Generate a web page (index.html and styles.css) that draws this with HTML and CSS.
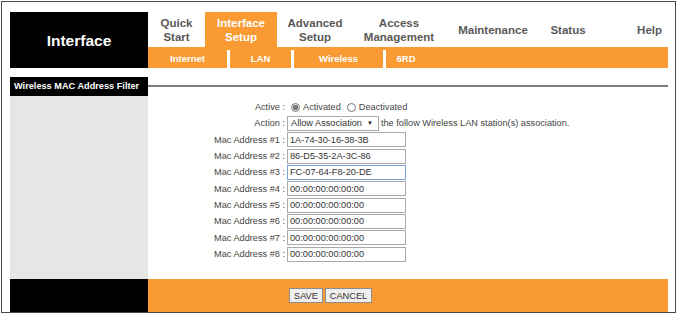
FILE: index.html
```html
<!DOCTYPE html>
<html lang="en">
<head>
    <meta charset="UTF-8">
    <title>Interface Setup - Wireless MAC Address Filter</title>
    <link rel="stylesheet" href="styles.css">
</head>
<body>
    <div class="frame">
        <!-- top navigation -->
        <div class="top">
            <div class="logo">Interface</div>
            <div class="nav">
                <div class="tabs">
                    <div class="tab">Quick<br>Start</div>
                    <div class="tab active">Interface<br>Setup</div>
                    <div class="tab">Advanced<br>Setup</div>
                    <div class="tab">Access<br>Management</div>
                    <div class="tab">Maintenance</div>
                    <div class="tab">Status</div>
                    <div class="tab help">Help</div>
                </div>
                <div class="subnav">
                    <span class="sub sub-internet">Internet</span>
                    <span class="sep"></span>
                    <span class="sub sub-lan">LAN</span>
                    <span class="sep"></span>
                    <span class="sub sub-wireless">Wireless</span>
                    <span class="sep"></span>
                    <span class="sub sub-6rd">6RD</span>
                </div>
            </div>
        </div>

        <div class="spacer"></div>

        <!-- section title -->
        <div class="section">
            <div class="section-title">Wireless MAC Address Filter</div>
            <div class="section-line"></div>
        </div>

        <!-- form body -->
        <div class="main">
            <div class="side"></div>
            <form class="content" id="macForm">
                <div class="row">
                    <label class="lbl">Active :</label>
                    <div class="val">
                        <input type="radio" name="active" value="1" checked> <span class="opt">Activated</span>
                        <input type="radio" name="active" value="0"> <span class="opt">Deactivated</span>
                    </div>
                </div>
                <div class="row">
                    <label class="lbl">Action :</label>
                    <div class="val">
                        <span class="select-box">
                            <select name="action">
                                <option>Allow Association</option>
                                <option>Deny Association</option>
                            </select>
                            <span class="arrow">&#9660;</span>
                        </span>
                        <span class="note">the follow Wireless LAN station(s) association.</span>
                    </div>
                </div>
                <div class="row">
                    <label class="lbl">Mac Address #1 :</label>
                    <div class="val"><input type="text" class="mac" value="1A-74-30-16-38-3B"></div>
                </div>
                <div class="row">
                    <label class="lbl">Mac Address #2 :</label>
                    <div class="val"><input type="text" class="mac" value="86-D5-35-2A-3C-86"></div>
                </div>
                <div class="row">
                    <label class="lbl">Mac Address #3 :</label>
                    <div class="val"><input type="text" class="mac focus" value="FC-07-64-F8-20-DE"></div>
                </div>
                <div class="row">
                    <label class="lbl">Mac Address #4 :</label>
                    <div class="val"><input type="text" class="mac" value="00:00:00:00:00:00"></div>
                </div>
                <div class="row">
                    <label class="lbl">Mac Address #5 :</label>
                    <div class="val"><input type="text" class="mac" value="00:00:00:00:00:00"></div>
                </div>
                <div class="row">
                    <label class="lbl">Mac Address #6 :</label>
                    <div class="val"><input type="text" class="mac" value="00:00:00:00:00:00"></div>
                </div>
                <div class="row">
                    <label class="lbl">Mac Address #7 :</label>
                    <div class="val"><input type="text" class="mac" value="00:00:00:00:00:00"></div>
                </div>
                <div class="row">
                    <label class="lbl">Mac Address #8 :</label>
                    <div class="val"><input type="text" class="mac" value="00:00:00:00:00:00"></div>
                </div>
            </form>
        </div>

        <!-- footer buttons -->
        <div class="footer">
            <div class="footer-side"></div>
            <div class="footer-bar">
                <button type="submit" form="macForm" class="btn">SAVE</button>
                <button type="button" class="btn">CANCEL</button>
            </div>
        </div>
    </div>
</body>
</html>
```

FILE: styles.css
```css
body {
    margin: 0;
    padding: 0;
    background-color: #fff;
    font-family: "Liberation Sans", Arial, sans-serif;
    color: #333;
}

/* outer frame */
.frame {
    margin: 1px 0 0 1px;
    width: 658px;
    height: 300px;
    padding: 10px 7px 0 8px;
    border: 1px solid #4a4a4a;
}

/* Header */
.top {
    display: flex;
    height: 56px;
}

.logo {
    width: 138px;
    background-color: #000;
    color: #fff;
    font-size: 15.5px;
    font-weight: bold;
    display: flex;
    align-items: center;
    justify-content: center;
    padding-top: 1px;
}

.nav {
    flex: 1;
    display: flex;
    flex-direction: column;
}

.tabs {
    display: grid;
    grid-template-columns: 57px 72px 76px 92px 96px 54px 1fr;
    height: 35px;
}

.tab {
    display: flex;
    align-items: center;
    justify-content: center;
    text-align: center;
    font-size: 11.5px;
    font-weight: bold;
    line-height: 14px;
    color: #595959;
}

.tab.active {
    background-color: #f99a33;
    color: #fff;
}

.tab.help {
    justify-content: flex-end;
    padding-right: 6px;
}

.subnav {
    flex: 1;
    display: flex;
    background-color: #f99a33;
}

.sub {
    display: flex;
    align-items: center;
    justify-content: center;
    color: #fff;
    font-size: 9.5px;
    font-weight: bold;
    padding-top: 1px;
}

.sub-internet { width: 79px; }
.sub-lan { width: 61px; }
.sub-wireless { width: 89px; }
.sub-6rd { width: 40px; }

.sep {
    width: 3px;
    margin-top: 3px;
    background-color: #fff;
}

.spacer {
    height: 9px;
}

/* section title */
.section {
    display: flex;
    align-items: center;
    height: 19px;
}

.section-title {
    width: 134px;
    height: 19px;
    padding-left: 4px;
    background-color: #000;
    color: #fff;
    font-size: 9.2px;
    font-weight: bold;
    line-height: 19px;
    white-space: nowrap;
}

.section-line {
    flex: 1;
    height: 2px;
    margin-top: -2px;
    background-color: #7d7d7d;
}

/* form area */
.main {
    display: flex;
    height: 183px;
}

.side {
    width: 138px;
    background-color: #e6e6e6;
}

.content {
    flex: 1;
    margin: 0;
    padding-top: 3px;
}

.row {
    display: flex;
    align-items: center;
    height: 16.33px;
    font-size: 9.2px;
}

.lbl {
    width: 137px;
    text-align: right;
    color: #444;
}

.val {
    display: flex;
    align-items: center;
    padding-left: 2px;
    white-space: nowrap;
}

.val input[type="radio"] {
    width: 9px;
    height: 9px;
    margin: 0 3px 0 4px;
    accent-color: #777;
}

.opt {
    margin-right: 2px;
    color: #444;
}

.select-box {
    display: inline-flex;
    align-items: center;
    height: 13px;
    border: 1px solid #a9a9a9;
    background-color: #fff;
    padding-right: 5px;
}

.select-box select {
    appearance: none;
    -webkit-appearance: none;
    border: none;
    background: transparent;
    font-family: "Liberation Sans", Arial, sans-serif;
    font-size: 9.2px;
    color: #333;
    padding: 0 4px 0 3px;
    margin: 0;
    outline: none;
}

.arrow {
    font-size: 6px;
    color: #222;
}

.note {
    margin-left: 2px;
    color: #444;
}

.mac {
    width: 113px;
    height: 11px;
    padding: 1px 2px;
    margin: 0;
    border: 1px solid #a9a9a9;
    font-family: "Liberation Sans", Arial, sans-serif;
    font-size: 9.2px;
    color: #333;
}

.mac.focus {
    border-color: #7aa2d6;
}

/* footer */
.footer {
    display: flex;
    height: 33px;
}

.footer-side {
    width: 138px;
    background-color: #000;
}

.footer-bar {
    flex: 1;
    display: flex;
    align-items: center;
    padding-left: 141px;
    gap: 2px;
    background-color: #f99a33;
}

.btn {
    height: 15px;
    padding: 0 4px;
    font-family: "Liberation Sans", Arial, sans-serif;
    font-size: 9.2px;
    color: #333;
    background-color: #eee;
    border: 1px solid #8c8c8c;
    border-radius: 0;
    cursor: pointer;
}
```
